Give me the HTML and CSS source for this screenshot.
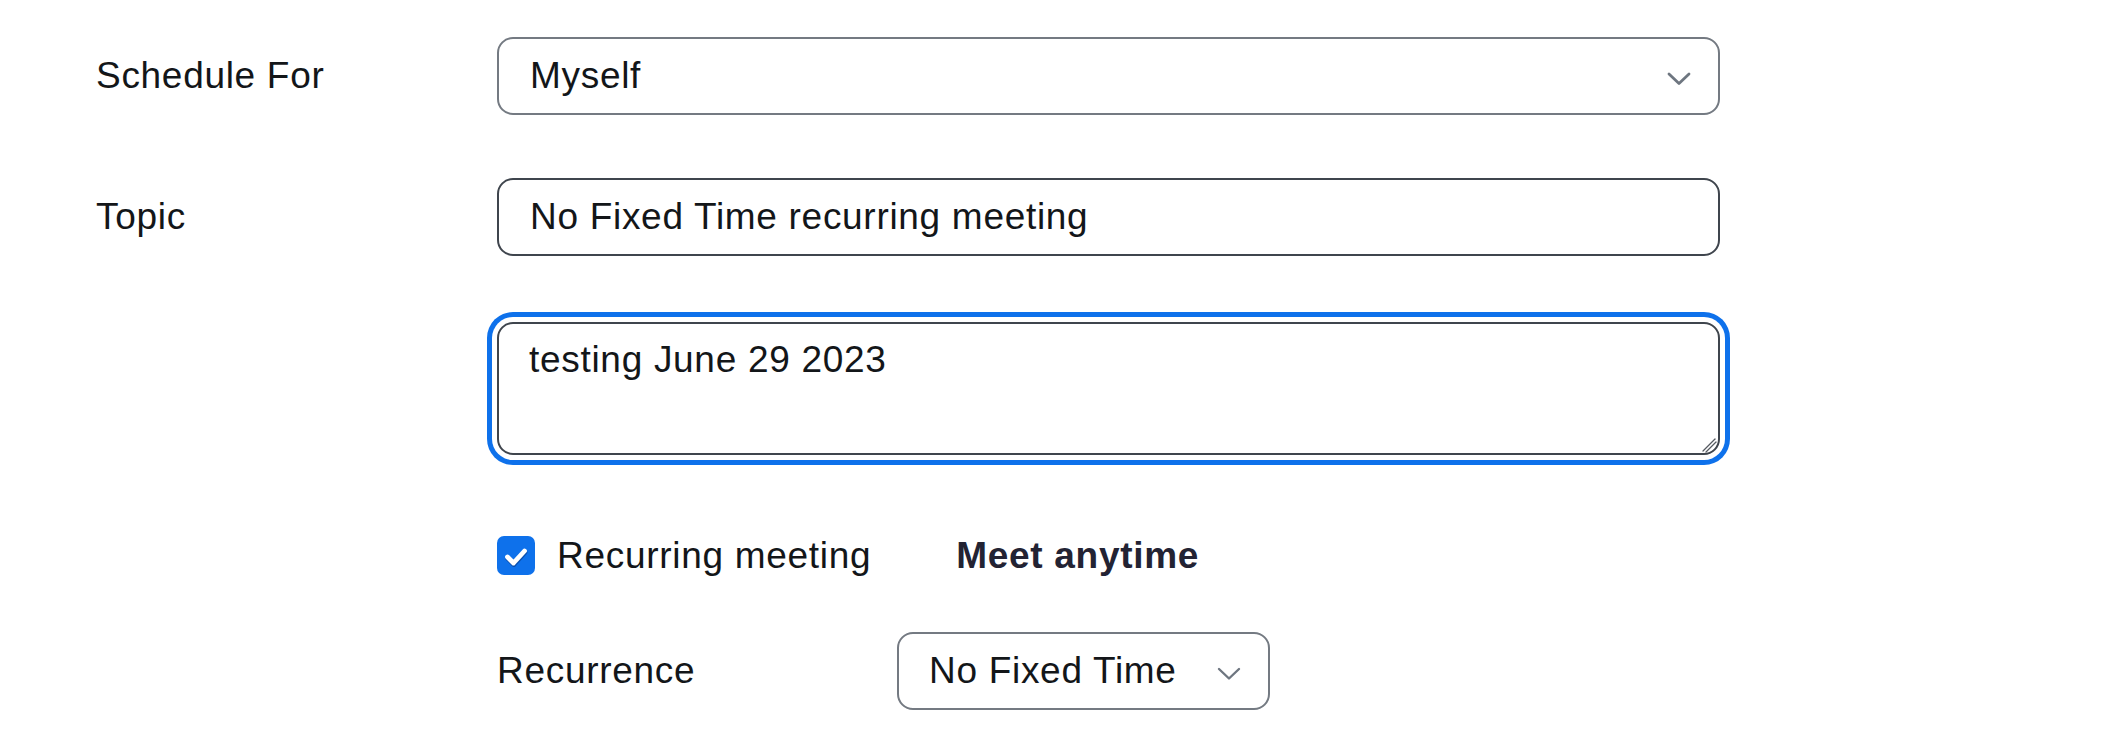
FILE: index.html
```html
<!DOCTYPE html>
<html lang="en">
<head>
<meta charset="utf-8">
<title>Schedule Meeting</title>
<link rel="stylesheet" href="styles.css">
</head>
<body>
<form class="form">
  <div class="row row-schedule">
    <div class="label">Schedule For</div>
    <div class="control">
      <div class="select select-wide">
        <span class="select-value">Myself</span>
        <svg class="chevron" width="24" height="14" viewBox="0 0 24 14"><path d="M2 2 L12 11.5 L22 2" fill="none" stroke="#6e7680" stroke-width="2.8" stroke-linecap="round" stroke-linejoin="round"/></svg>
      </div>
    </div>
  </div>

  <div class="row row-topic">
    <div class="label">Topic</div>
    <div class="control">
      <div class="input">No Fixed Time recurring meeting</div>
    </div>
  </div>

  <div class="row row-desc">
    <div class="label"></div>
    <div class="control textarea-wrap">
      <textarea class="textarea" spellcheck="false">testing June 29 2023</textarea>
      <svg class="grip" width="18" height="18" viewBox="0 0 18 18"><path d="M3 16 L15 4" stroke="#555a61" stroke-width="1.3" stroke-linecap="round"/><path d="M6 17 L16 7" stroke="#555a61" stroke-width="1.3" stroke-linecap="round"/></svg>
    </div>
  </div>

  <div class="row row-recurring">
    <div class="label"></div>
    <div class="control check-line">
      <span class="checkbox">
        <svg width="38" height="39" viewBox="0 0 38 39"><path d="M10.5 21 L16.5 27 L27.5 15" fill="none" stroke="rgba(0,0,40,0.3)" stroke-width="5" stroke-linecap="round" stroke-linejoin="round" transform="translate(0.4,1.4)"/><path d="M10.5 21 L16.5 27 L27.5 15" fill="none" stroke="#ffffff" stroke-width="4.8" stroke-linecap="round" stroke-linejoin="round"/></svg>
      </span>
      <span class="check-text">Recurring meeting</span>
      <span class="meet-anytime">Meet anytime</span>
    </div>
  </div>

  <div class="row row-recurrence">
    <div class="label"></div>
    <div class="control recurrence-line">
      <span class="sub-label">Recurrence</span>
      <div class="select select-small">
        <span class="select-value">No Fixed Time</span>
        <svg class="chevron" width="24" height="14" viewBox="0 0 24 14"><path d="M2 2 L12 11.5 L22 2" fill="none" stroke="#6e7680" stroke-width="2.4" stroke-linecap="round" stroke-linejoin="round"/></svg>
      </div>
    </div>
  </div>
</form>
</body>
</html>
```

FILE: styles.css
```css
html, body {
  margin: 0;
  padding: 0;
  background: #ffffff;
}

body {
  font-family: "Liberation Sans", Arial, sans-serif;
  font-size: 37px;
  letter-spacing: 0.7px;
  color: #131619;
}

.form {
  display: flex;
  flex-direction: column;
  padding: 37px 0 0 96px;
}

.row {
  display: flex;
  align-items: center;
}

.row-topic { margin-top: 63px; }
.row-desc { margin-top: 66px; }
.row-recurring { margin-top: 81px; }
.row-recurrence { margin-top: 57px; }

.label {
  width: 401px;
  flex: none;
}

.control {
  width: 1223px;
  flex: none;
}

.select,
.input {
  box-sizing: border-box;
  height: 78px;
  border-radius: 16px;
  border: 2px solid #747a82;
  background: #fff;
  display: flex;
  align-items: center;
  padding: 0 27px 0 31px;
}

.input {
  border-color: #3f454d;
}

.select-value {
  flex: 1;
}

.chevron {
  display: block;
  flex: none;
  margin-top: 5px;
}

.textarea-wrap {
  position: relative;
}

.textarea {
  display: block;
  box-sizing: border-box;
  width: 1223px;
  height: 133px;
  margin: 0;
  border: 2px solid #3f454d;
  border-radius: 16px;
  padding: 9px 30px 0 30px;
  font-family: "Liberation Sans", Arial, sans-serif;
  font-size: 37px;
  letter-spacing: 0.7px;
  line-height: 1.46;
  color: #131619;
  background: #fff;
  outline: none;
  resize: none;
  overflow: hidden;
  box-shadow: 0 0 0 5px #ffffff, 0 0 0 10px #0e71eb;
}

.grip {
  position: absolute;
  right: 2px;
  bottom: 2px;
  display: block;
}

.check-line {
  display: flex;
  align-items: center;
  height: 39px;
}

.checkbox {
  width: 38px;
  height: 39px;
  border-radius: 7px;
  background: #0e71eb;
  flex: none;
}

.checkbox svg {
  display: block;
}

.check-text {
  margin-left: 22px;
}

.meet-anytime {
  margin-left: 85px;
  font-weight: 700;
  color: #232333;
}

.recurrence-line {
  display: flex;
  align-items: center;
}

.sub-label {
  width: 400px;
  flex: none;
}

.select-small {
  width: 373px;
  padding-left: 30px;
}
```
